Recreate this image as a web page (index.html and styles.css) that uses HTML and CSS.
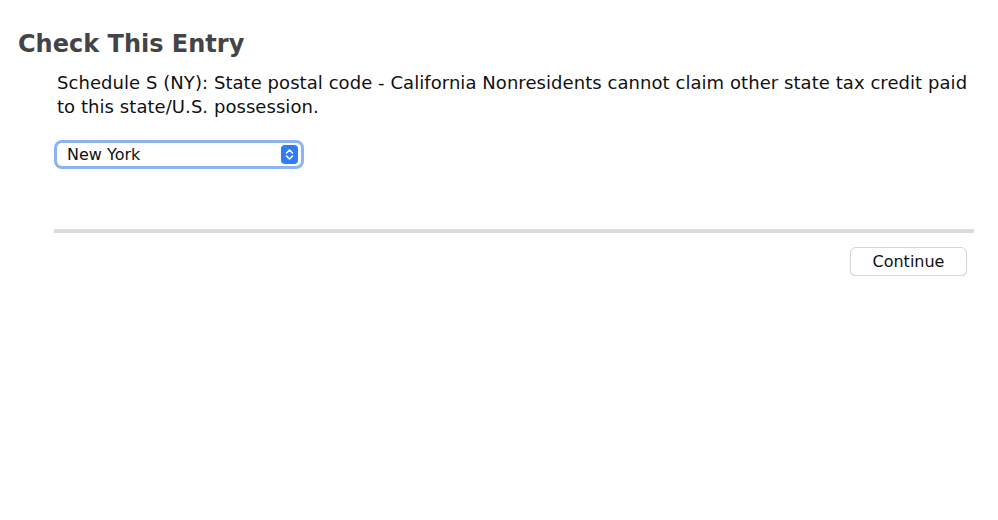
FILE: index.html
```html
<!DOCTYPE html>
<html>
<head>
<meta charset="utf-8">
<link rel="stylesheet" href="styles.css">
</head>
<body>
<div class="page">
  <h1 class="title">Check This Entry</h1>
  <div class="content">
    <p class="message">Schedule S (NY): State postal code - California Nonresidents cannot claim other state tax credit paid to this state/U.S. possession.</p>
    <div class="select-ring">
      <div class="select">
        <span class="select-value">New York</span>
        <span class="stepper">
          <svg width="9" height="13" viewBox="0 0 9 13"><path d="M1.5 5 L4.5 2 L7.5 5 M1.5 8 L4.5 11 L7.5 8" fill="none" stroke="#fff" stroke-width="1.6" stroke-linecap="round" stroke-linejoin="round"/></svg>
        </span>
      </div>
    </div>
    <div class="divider"></div>
    <div class="actions">
      <button class="btn">Continue</button>
    </div>
  </div>
</div>
</body>
</html>
```
FILE: styles.css
```css
html, body { margin: 0; padding: 0; background: #fff; }
body { font-family: "DejaVu Sans", "Liberation Sans", sans-serif; color: #111; }
.page { padding: 28px 24px 0 18px; }
.title { margin: 0; font-size: 24px; font-weight: bold; color: #444; line-height: 32px; }
.content { padding-left: 36px; }
.message { margin: 11px 0 0 0; font-size: 18px; line-height: 24px; padding-left: 3px; width: 920px; letter-spacing: 0.06px; }
.select-ring { margin-top: 21px; width: 244px; padding: 3px; border-radius: 8px; background: #8cb4f2; }
.select { height: 23px; background: #fff; border-radius: 5px; display: flex; align-items: center; justify-content: space-between; padding: 0 3px 0 10px; }
.select-value { font-size: 16px; color: #111; }
.stepper { width: 17px; height: 19px; border-radius: 4px; background: #2f7cf6; display: flex; align-items: center; justify-content: center; }
.divider { margin-top: 60px; height: 4px; background: #dcdcdc; width: 920px; }
.actions { display: flex; justify-content: flex-end; width: 913px; margin-top: 14px; }
.btn { font-family: inherit; font-size: 16px; color: #111; background: #fff; border: 1px solid #d6d6d6; border-radius: 6px; box-shadow: 0 1px 1px rgba(0,0,0,0.12); width: 117px; height: 29px; padding: 0; }
```
